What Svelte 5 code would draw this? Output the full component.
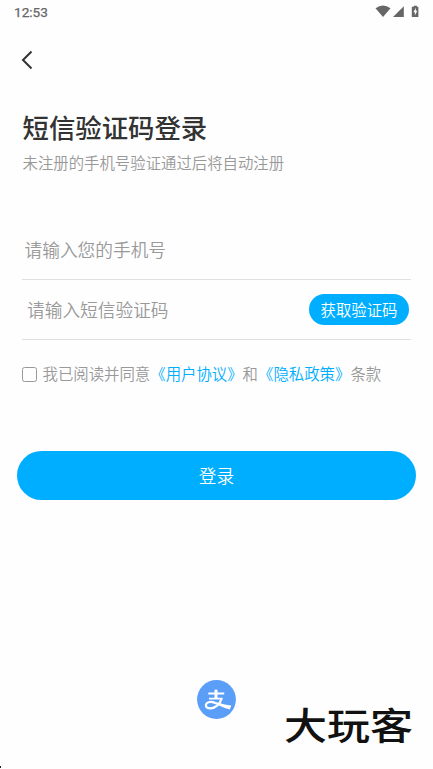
<script>
  let phone = $state('');
  let code = $state('');
  let agreed = $state(false);
</script>

<main class="screen">
  <header class="status">
    <span class="time">12:53</span>
    <svg class="signals" width="46" height="14" viewBox="0 0 46 14" fill="#666">
      <path d="M.5 3.3Q8-2.500 15.500 3.300L8 12Z" />
      <path d="M28.800 1.300V12H18Z" />
      <path d="M38.700 .7h3.200v1h1.500v10.200h-6.600V1.700h1.900Z" />
      <path d="M40.900 2.700l-2.500 4.500h1.500v3.200l2.400-4.600h-1.500Z" fill="#fff" />
    </svg>
  </header>

  <button class="back" aria-label="返回">
    <svg width="12" height="20" viewBox="0 0 12 20" fill="none" stroke="#333" stroke-width="2">
      <path d="M10.500 1.500L2 10L10.500 18.500" />
    </svg>
  </button>

  <section class="intro">
    <h1>短信验证码登录</h1>
    <p>未注册的手机号验证通过后将自动注册</p>
  </section>

  <form onsubmit={(e) => e.preventDefault()}>
    <div class="field phone">
      <input type="tel" placeholder="请输入您的手机号" bind:value={phone} />
    </div>
    <div class="field code">
      <input type="text" placeholder="请输入短信验证码" bind:value={code} />
      <button type="button" class="send">获取验证码</button>
    </div>
    <label class="terms">
      <input type="checkbox" bind:checked={agreed} />
      <span>我已阅读并同意<b>《用户协议》</b>和<b>《隐私政策》</b>条款</span>
    </label>
    <button class="login">登录</button>
  </form>

  <footer>
    <svg class="alipay" width="39" height="39" viewBox="0 0 39 39" fill="none" stroke="#fff">
      <circle cx="19.500" cy="19.500" r="19.400" fill="#5a9ef8" stroke="none" />
      <path d="M11.300 13.500H27.200M12 18.600H25.600" stroke-width="1.800" />
      <path d="M19 9.700V18.500" stroke-width="3" />
      <path d="M24.600 18.500C23 24.500 18 28.400 13.500 28.400C10 28.400 8.700 26.800 8.900 24.800C9.300 22.300 13 21.300 17 22.300" stroke-width="2.200" />
      <path d="M14.500 21.300C19 21.500 25 24.600 34.300 25.500L32.700 29.600C26 27.700 20 24 14.500 23Z" fill="#fff" stroke="none" />
    </svg>
    <span class="brand">大玩客</span>
  </footer>
  <i class="corner"></i>
</main>

<style>
  :global(body) {
    background: #fff;
  }
  .screen {
    position: relative;
    box-sizing: border-box;
    width: 433px;
    height: 769px;
    overflow: hidden;
    display: flex;
    flex-direction: column;
    background: #fefefe;
    color: #999;
    font-family: "Noto Sans CJK SC", sans-serif;
    font-size: 15.4px;
    font-weight: 350;
  }
  button {
    border: 0;
    padding: 0;
    font-family: inherit;
    font-weight: inherit;
    cursor: pointer;
  }
  .status {
    height: 24px;
    padding: 0 12px 0 14px;
    display: flex;
    justify-content: space-between;
    align-items: center;
  }
  .time {
    font: 400 13.6px/24px Roboto, sans-serif;
    color: #666;
    -webkit-text-stroke: 0.25px #666;
  }
  .back {
    width: 12px;
    height: 20px;
    margin: 26px 0 0 21px;
    background: none;
  }
  .back svg {
    display: block;
  }
  .intro {
    height: 148px;
    padding: 37px 22.5px 0;
    box-sizing: border-box;
  }
  h1 {
    margin: 0;
    font-size: 26.4px;
    line-height: 40px;
    font-weight: 500;
    color: #333;
  }
  p {
    margin: 3px 0 0;
    line-height: 24px;
  }
  form {
    display: flex;
    flex-direction: column;
  }
  .field {
    box-sizing: border-box;
    height: 60px;
    margin: 0 22px;
    border-bottom: 1px solid #e0e0e0;
    display: flex;
    align-items: center;
    padding-left: 2.500px;
  }
  .field.phone {
    height: 62px;
    padding-top: 3px;
  }
  .field.code {
    padding: 0 2px 0 5px;
  }
  .field input {
    flex: 1;
    min-width: 0;
    border: 0;
    padding: 0 0 2px;
    outline: 0;
    background: none;
    font: 350 17.700px/30px "Noto Sans CJK SC", sans-serif;
    color: #333;
  }
  .field input::placeholder {
    color: #999;
    opacity: 1;
  }
  .send {
    width: 100px;
    height: 31px;
    border-radius: 16px;
    background: #00aeff;
    color: #fff;
    font-size: 15.4px;
    line-height: 31px;
  }
  .terms {
    display: flex;
    align-items: center;
    height: 24px;
    margin: 22px 22px 0;
    white-space: nowrap;
  }
  .terms span {
    padding-bottom: 2px;
  }
  .terms input {
    appearance: none;
    box-sizing: border-box;
    width: 15px;
    height: 15px;
    margin: 0 5.500px 0 0;
    border: 1px solid #999;
    border-radius: 2.5px;
  }
  .terms input:checked {
    background: #00aeff;
  }
  .terms b {
    font-weight: inherit;
    color: #00aeff;
  }
  .login {
    height: 49px;
    margin: 65px 17px 0;
    border-radius: 25px;
    background: #00aeff;
    color: #fff;
    font-size: 17.700px;
    line-height: 49px;
  }
  footer {
    margin-top: 180px;
    display: grid;
    grid-template-columns: 197px 39px 48px 130px;
  }
  .alipay {
    grid-column: 2;
  }
  .brand {
    grid-column: 4;
    height: 40px;
    margin-top: 23px;
    font-size: 43px;
    line-height: 40px;
    font-weight: 500;
    color: #111;
    white-space: nowrap;
    transform: scaleY(0.87);
  }
  .corner {
    position: absolute;
    left: 0;
    bottom: 1px;
    width: 1px;
    height: 2px;
    background: #222;
  }
</style>
